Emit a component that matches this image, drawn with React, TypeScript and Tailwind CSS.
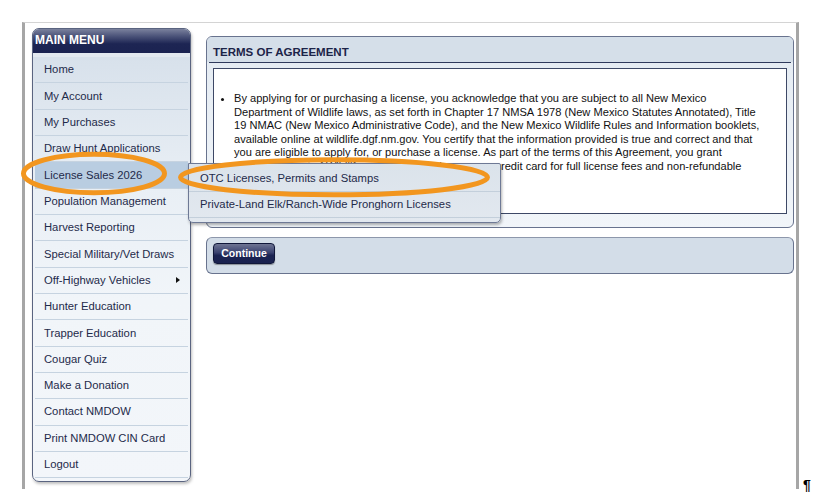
import React from "react";

const menuItems = [
  "Home",
  "My Account",
  "My Purchases",
  "Draw Hunt Applications",
  "License Sales 2026",
  "Population Management",
  "Harvest Reporting",
  "Special Military/Vet Draws",
  "Off-Highway Vehicles",
  "Hunter Education",
  "Trapper Education",
  "Cougar Quiz",
  "Make a Donation",
  "Contact NMDOW",
  "Print NMDOW CIN Card",
  "Logout",
];

const termsLines = [
  "By applying for or purchasing a license, you acknowledge that you are subject to all New Mexico",
  "Department of Wildlife laws, as set forth in Chapter 17 NMSA 1978 (New Mexico Statutes Annotated), Title",
  "19 NMAC (New Mexico Administrative Code), and the New Mexico Wildlife Rules and Information booklets,",
  "available online at wildlife.dgf.nm.gov. You certify that the information provided is true and correct and that",
  "you are eligible to apply for, or purchase a license. As part of the terms of this Agreement, you grant",
  "the Department of Wildlife permission to charge your credit card for full license fees and non-refundable",
  "application fees.",
];

function MenuItem({ label }: { label: string }) {
  const active = label === "License Sales 2026";
  const hasSub = label === "Off-Highway Vehicles";
  return (
    <div
      className={`flex h-[26.33px] items-center justify-between border-b border-[#c6d3e0] pl-[9px] pr-[8px] text-[11.25px] text-[#1e2a4a] ${
        active ? "bg-[#b9cde1]" : ""
      }`}
    >
      <span>{label}</span>
      {hasSub && (
        <span className="h-0 w-0 border-y-[3px] border-l-[4px] border-y-transparent border-l-[#111]" />
      )}
    </div>
  );
}

export default function App() {
  return (
    <div className="relative h-[501px] w-[817px] overflow-hidden bg-white font-['Liberation_Sans',Arial,sans-serif]">
      <div className="flex items-end pl-[22px] pt-[22px]">
        {/* page frame */}
        <div className="flex h-[467px] w-[777px] items-start gap-[15px] border-l-[3px] border-r-[3px] border-t border-l-[#a6a6a6] border-r-[#a6a6a6] border-t-[#d4d4d4] pl-[7px] pt-[5px]">
          {/* main menu */}
          <div className="w-[159px] overflow-hidden rounded-[7px] border border-[#5a6480] bg-[linear-gradient(#d4dee9_0%,#e9eff5_35%,#f1f5f9_60%,#f3f6fa_100%)] shadow-[1px_2px_3px_rgba(0,0,0,0.25)]">
            <div className="flex h-[24px] items-start bg-[linear-gradient(#7a819d_0%,#4b5379_30%,#1d2553_62%,#1b2351_100%)] pl-[2px] pt-[5px] text-[12px] font-bold leading-[12px] text-white">
              MAIN MENU
            </div>
            <div className="h-[4px] bg-[#e3e9f0]" />
            <div className="px-[2px] pb-[3px]">
              {menuItems.map((m) => (
                <MenuItem key={m} label={m} />
              ))}
            </div>
          </div>

          {/* content column */}
          <div className="mt-[8px] flex w-[588px] flex-col gap-[9px]">
            <div className="flex h-[192px] flex-col overflow-hidden rounded-[6px] border border-[#68738e] bg-[linear-gradient(#e4ebf2,#f1f5f9)]">
              <div className="h-[25px] bg-[#d5dfe9] pl-[6px] pt-[9px] text-[11.5px] font-bold leading-[12px] text-[#1c2448]">
                TERMS OF AGREEMENT
              </div>
              <div className="mx-[2px] h-px bg-[#2f3a5c]" />
              <div className="mx-[6px] mt-[5px] h-[146px] overflow-hidden border border-[#3d4866] bg-white">
                <ul className="list-disc pl-[20px] pt-[23px] text-[11.1px] leading-[13.6px] text-[#111]">
                  <li>
                    {termsLines.map((l, i) => (
                      <span key={i} className="block whitespace-nowrap">
                        {l}
                      </span>
                    ))}
                  </li>
                </ul>
              </div>
            </div>

            <div className="flex h-[37px] items-start rounded-[6px] border border-[#68738e] border-t-[#8d97ab] bg-[#d3dde8] pl-[6px] pt-[5px]">
              <button className="h-[21px] w-[62px] rounded-[4px] border border-[#10173a] bg-[linear-gradient(#6f7593_0%,#3a4270_45%,#1b2352_60%,#1a2250_100%)] text-[10.5px] font-bold text-white shadow-[0_1px_1px_rgba(0,0,0,0.35)]">
                Continue
              </button>
            </div>
          </div>
        </div>
        <span className="mb-[-3px] ml-[4px] text-[14px] font-bold leading-[14px] text-black">¶</span>
      </div>

      {/* fly-out submenu */}
      <div className="absolute left-[188px] top-[163px] w-[313px] rounded-b-[5px] rounded-tr-[2px] border border-[#6e7995] bg-[linear-gradient(#dbe3eb,#e2e8ef)] pb-[4px] pt-[1px] shadow-[1px_2px_3px_rgba(0,0,0,0.3)]">
        <div className="flex h-[27px] items-center border-b border-[#c3cfdb] pl-[11px] text-[11.25px] text-[#1e2a4a]">
          OTC Licenses, Permits and Stamps
        </div>
        <div className="flex h-[26px] items-center border-b border-[#c3cfdb] pl-[11px] text-[11.25px] text-[#1e2a4a]">
          Private-Land Elk/Ranch-Wide Pronghorn Licenses
        </div>
      </div>

      {/* highlight marks */}
      <svg
        className="pointer-events-none absolute left-0 top-0"
        width="817"
        height="501"
        viewBox="0 0 817 501"
      >
        <ellipse cx="94" cy="173.5" rx="70.5" ry="19.2" fill="none" stroke="#f2961f" strokeWidth="5" />
        <ellipse cx="334" cy="177.3" rx="153.5" ry="17.5" fill="none" stroke="#f2961f" strokeWidth="5" />
      </svg>
    </div>
  );
}
